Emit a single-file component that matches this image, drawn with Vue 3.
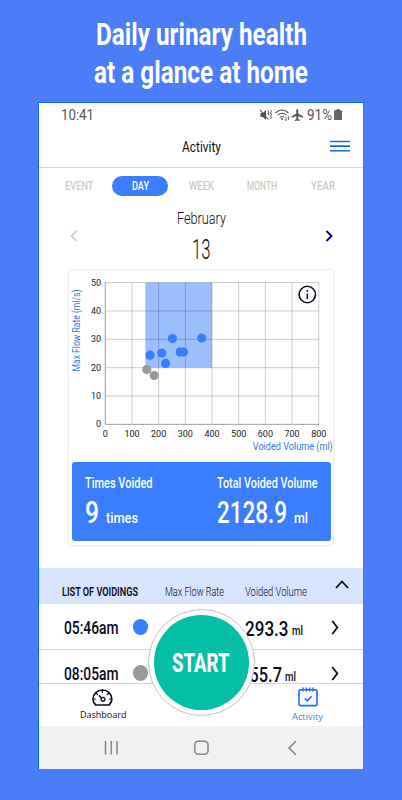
<template>
  <div class="page">
    <div class="headline">
      <Label text="Daily urinary health" :w="211" :size="31" />
      <Label text="at a glance at home" :w="214" :size="31" />
    </div>

    <div class="phone">
      <div class="status">
        <Label class="clock" text="10:41" :w="33" :size="14" />
        <svg class="status-icons" width="46" height="14" viewBox="0 0 46 14">
          <path d="M1.5 5h2.3L7 2v10L3.8 9H1.5z" fill="#555" />
          <path d="M1 1.8l8.5 9.7" stroke="#555" stroke-width="1.1" />
          <path d="M9 2.5l.8 1.5-.8 1.5.8 1.5M11.6 2l.8 1.5-.8 1.5.8 1.5-.8 1.5.8 1.5-.8 1.5" fill="none" stroke="#555" />
          <g fill="none" stroke="#555" stroke-width="1.1">
            <path d="M16.500 5q6.500-6 13 0M18.700 7.200q4.300-3.900 8.600 0M21 9.300q2-1.700 4 0" />
            <path d="M27 8.500v4M26 11.500l1 1 1-1M29.500 12V8.500M28.700 9.300l.8-.8.8.8" stroke-width=".8" />
          </g>
          <circle cx="23" cy="11" r="1.100" fill="#555" />
          <path d="M38.300 1q1 0 1 1.400v3l4.800 3v1.400l-4.800-1.500v2.700l1.500 1.100v1l-2.500-.7-2.500.7v-1l1.500-1.100V8.300l-4.800 1.500V8.400l4.800-3v-3Q37.300 1 38.300 1z" fill="#555" />
        </svg>
        <Label class="percent" text="91%" :w="25" :size="14" />
        <svg class="battery" width="8" height="11" viewBox="0 0 8 11">
          <path d="M2.500 0h3v1.200H8V11H0V1.200h2.500z" fill="#666" />
        </svg>
      </div>

      <div class="header">
        <Label text="Activity" :w="39" :size="15.5" />
        <svg class="burger" width="20" height="12" viewBox="0 0 20 12">
          <path d="M0 1.500h20M0 6.100h20M0 10.700h20" stroke="#1b68f0" stroke-width="1.600" />
        </svg>
      </div>

      <div class="tabs">
        <div v-for="tab in tabs" :key="tab.name" class="tab" :class="{ active: tab.name === current }" @click="current = tab.name">
          <Label :text="tab.name" :w="tab.w" :size="12.8" />
        </div>
      </div>

      <div class="date">
        <svg width="8" height="12" viewBox="0 0 8 12" class="prev"><path d="M6.500 1L1.500 6l5 5" /></svg>
        <div class="day">
          <Label text="February" :w="49" :size="16.3" />
          <Label text="13" :w="18.5" :size="27" />
        </div>
        <svg width="8" height="12" viewBox="0 0 8 12" class="next"><path d="M1.500 1l5 5-5 5" /></svg>
      </div>

      <div class="card">
        <svg class="chart" width="264" height="192" viewBox="69 270 264 192">
          <rect :x="px(150)" y="282.500" :width="px(400) - px(150)" height="85" fill="#9dbeff" />
          <g stroke="#000" stroke-opacity=".2">
            <line v-for="v in xTicks" :key="'x' + v" :x1="px(v)" :x2="px(v)" y1="282.500" y2="424.500" />
            <line v-for="v in yTicks" :key="'y' + v" x1="105.300" x2="319" :y1="py(v)" :y2="py(v)" />
          </g>
          <path d="M105.300 282v142.400H319" fill="none" stroke="#aaa" />
          <text v-for="v in xTicks" :key="'tx' + v" class="tick" :x="px(v)" y="436.500" text-anchor="middle">{{ v }}</text>
          <text v-for="v in yTicks" :key="'ty' + v" class="tick" x="101" :y="py(v) + 3" text-anchor="end">{{ v }}</text>
          <circle v-for="(p, i) in points" :key="i" :cx="p.x" :cy="p.y" r="4.600" :fill="p.low ? '#999' : '#3b7dff'" />
          <text class="axis" transform="translate(80 371.500) rotate(-90)" textLength="82" lengthAdjust="spacingAndGlyphs">Max Flow Rate (ml/s)</text>
          <text class="axis" x="252.800" y="450" textLength="80" lengthAdjust="spacingAndGlyphs">Voided Volume (ml)</text>
          <circle cx="307.300" cy="294.500" r="8.200" fill="#fff" stroke="#0b0b24" stroke-width="1.600" />
          <path d="M307.300 290v1.800M307.300 293.500v5.500" stroke="#0b0b24" stroke-width="1.500" />
        </svg>
        <div class="totals">
          <div class="total">
            <Label text="Times Voided" :w="67.5" :size="14.5" />
            <div class="value">
              <Label text="9" :w="14" :size="32" />
              <Label text="times" :w="32" :size="15.5" />
            </div>
          </div>
          <div class="total">
            <Label text="Total Voided Volume" :w="100.5" :size="14.5" />
            <div class="value">
              <Label text="2128.9" :w="70" :size="32" />
              <Label text="ml" :w="14" :size="15.5" />
            </div>
          </div>
        </div>
      </div>

      <div class="list-head">
        <Label class="title" text="LIST OF VOIDINGS" :w="76" :size="12.8" />
        <Label class="flow" text="Max Flow Rate" :w="59" :size="12.8" />
        <Label class="vol" text="Voided Volume" :w="62" :size="12.8" />
        <svg class="up" width="14" height="9" viewBox="0 0 14 9"><path d="M1 8l6-6.500L13 8" /></svg>
      </div>

      <div class="list">
        <div v-for="row in rows" :key="row.time" class="row">
          <Label class="time" :text="row.time" :w="54.5" :size="18" />
          <span class="dot" :class="{ low: row.low }"></span>
          <div class="amount" :class="{ low: row.low }">
            <Label :text="row.volume" :w="row.low ? 42 : 43.5" :size="20.5" />
            <Label text="ml" :w="11" :size="13" />
          </div>
          <svg class="go" width="8" height="15" viewBox="0 0 8 15"><path d="M1.300 1l5 6.500-5 6.500" /></svg>
        </div>
      </div>

      <div class="nav">
        <div class="nav-item dash">
          <svg width="21" height="17" viewBox="0 0 21 17" fill="none" stroke="#0b0b24" stroke-width="1.600" stroke-linecap="round" stroke-linejoin="round">
            <path d="M3.800 16Q1 13.800 1 10a9.400 9 0 0 1 18.800 0q0 3.800-2.800 6z" />
            <path d="M10.400 1.200v2M1.500 10h2M17.300 10h2M4.300 4.300l1.200 1.200M16.500 4.300l-1.200 1.200" stroke-width="1.200" />
            <circle cx="11" cy="10.200" r="1.900" stroke-width="1.300" />
            <path d="M7.300 6.700l2.300 2.300" />
          </svg>
          <Label text="Dashboard" :w="46.5" :size="9.3" />
        </div>
        <div class="nav-item act">
          <svg width="20" height="20" viewBox="0 0 20 20" fill="none" stroke="#1f6ff5" stroke-width="1.600">
            <rect x="1" y="2.800" width="18" height="15.800" rx="1.500" />
            <path d="M5 .5v4M8.300 .5v4M11.700 .5v4M15 .5v4" stroke-width="1.400" />
            <path d="M6.700 11.300l2.700 2.500 4.300-4.600" />
          </svg>
          <Label text="Activity" :w="31" :size="9.3" />
        </div>
      </div>

      <div class="system">
        <svg width="324" height="43" viewBox="0 0 324 43" fill="none" stroke="#858585" stroke-width="1.500">
          <path d="M66.500 15v13.500M72.300 15v13.500M78 15v13.500" />
          <rect x="155.800" y="15.300" width="13.200" height="13" rx="3.500" />
          <path d="M257 15.300l-7 6.700 7 6.700" />
        </svg>
      </div>

      <button class="start">
        <span class="disc"><Label text="START" :w="57.5" :size="25.5" /></span>
      </button>
    </div>
  </div>
</template>

<script setup>
import { h, ref } from 'vue'

// condensed one-line text: the box is as tall as the capitals, w is the set width
const Label = (props) =>
  h('svg', { class: 'label', width: props.w, height: props.size * 0.711 }, [
    h('text', {
      x: 0,
      y: props.size * 0.711,
      'font-size': props.size,
      textLength: props.w,
      lengthAdjust: 'spacingAndGlyphs'
    }, props.text)
  ])
Label.props = ['text', 'w', 'size']

const current = ref('DAY')
const tabs = [
  { name: 'EVENT', w: 28.5 },
  { name: 'DAY', w: 17 },
  { name: 'WEEK', w: 25 },
  { name: 'MONTH', w: 30 },
  { name: 'YEAR', w: 24 }
]

const xTicks = [0, 100, 200, 300, 400, 500, 600, 700, 800]
const yTicks = [0, 10, 20, 30, 40, 50]
const px = (v) => 105.3 + v * 0.2668
const py = (v) => 424.4 - v * 2.836

const points = [
  { x: 150, y: 355.2 },
  { x: 161.7, y: 353 },
  { x: 165.6, y: 363.4 },
  { x: 172.4, y: 338.6 },
  { x: 180.2, y: 352 },
  { x: 183.6, y: 352 },
  { x: 201.7, y: 338 },
  { x: 146.8, y: 369.6, low: true },
  { x: 154.2, y: 375.5, low: true }
]

const rows = [
  { time: '05:46am', volume: '293.3' },
  { time: '08:05am', volume: '155.7', low: true }
]
</script>

<style>
body {
  background: #4c7df9;
}
</style>

<style scoped>
.page {
  width: 402px;
  height: 800px;
  overflow: hidden;
  background: #4c7df9;
  font-family: Roboto, "Liberation Sans", sans-serif;
}
.label {
  display: block;
  flex: none;
  overflow: visible;
  fill: currentColor;
}
.headline {
  height: 102px;
  padding-top: 22.5px;
  box-sizing: border-box;
  display: flex;
  flex-direction: column;
  align-items: center;
  gap: 16.5px;
  color: #fff;
  font-weight: 700;
}
.phone {
  position: relative;
  width: 324px;
  height: 666px;
  margin-left: 38px;
  border: 1px solid #0f6bff;
  border-right-color: #3d78fb;
  border-bottom: 0;
  background: #fff;
  color: #0b0b24;
}
.status {
  height: 23px;
  display: flex;
  align-items: center;
  color: #555;
}
.clock {
  margin-left: 22px;
}
.status-icons {
  margin-left: 165px;
}
.percent,
.battery {
  margin-left: 2px;
}
.header {
  height: 41px;
  border-bottom: 1px solid #d9d9d9;
  display: grid;
  grid-template-columns: 1fr auto 1fr;
  align-items: center;
  padding-top: 0;
  color: #111;
}
.header .label {
  grid-column: 2;
}
.burger {
  justify-self: end;
  margin: 0 13px 2px 0;
}
.tabs {
  height: 36px;
  padding: 0 9.5px;
  display: grid;
  grid-template-columns: repeat(5, 61px);
  align-items: center;
  justify-items: center;
  color: #cbcbc5;
  font-weight: 500;
}
.tab {
  height: 20px;
  display: flex;
  align-items: center;
}
.tab.active {
  width: 56px;
  justify-content: center;
  border-radius: 10px;
  background: #3b7dff;
  color: #fff;
}
.date {
  height: 65px;
  box-sizing: border-box;
  display: flex;
  justify-content: space-between;
  align-items: center;
  padding: 0 30px 2px 31px;
}
.date path {
  fill: none;
  stroke: #000090;
  stroke-width: 1.8;
}
.date .prev path {
  stroke: #c9caf0;
}
.day {
  height: 48px;
  display: flex;
  flex-direction: column;
  align-items: center;
  justify-content: space-between;
  font-weight: 300;
}
.card {
  width: 264px;
  height: 275px;
  margin-left: 29px;
  border: 1px solid #eee;
  border-radius: 4px;
  box-shadow: 0 0 2px #eee;
}
.chart {
  display: block;
  overflow: visible;
}
.tick {
  font-size: 9px;
  fill: #222;
}
.axis {
  font-size: 11.5px;
  fill: #3478e5;
}
.totals {
  width: 259px;
  height: 79px;
  margin-left: 2.5px;
  border-radius: 3px;
  background: #3b7dff;
  color: #fff;
  display: grid;
  grid-template-columns: 132px 1fr;
  padding: 15.5px 0 0 13.5px;
  box-sizing: border-box;
  font-weight: 500;
}
.value {
  display: flex;
  align-items: flex-end;
  gap: 7px;
  margin-top: 12.5px;
}
.list-head {
  height: 36px;
  margin-top: 22px;
  background: #d8e4fe;
  display: flex;
  align-items: flex-start;
  font-weight: 300;
}
.list-head .label {
  margin-top: 19px;
}
.list-head .title {
  margin-left: 22.5px;
  font-weight: 600;
}
.flow {
  margin-left: 27px;
}
.vol {
  margin-left: 21.5px;
}
.up {
  margin: 12px 0 0 28px;
}
.up path,
.go path {
  fill: none;
  stroke: #0b0b16;
  stroke-width: 1.8;
}
.list {
  height: 79px;
  overflow: hidden;
}
.row {
  height: 45px;
  border-bottom: 1px solid #d5d5d5;
  display: flex;
  align-items: flex-start;
  font-weight: 500;
}
.time {
  margin: 17.3px 0 0 25.3px;
}
.dot {
  width: 15.5px;
  height: 15.5px;
  margin: 15px 0 0 14px;
  border-radius: 50%;
  background: #3b7dff;
}
.dot.low {
  background: #999;
}
.amount {
  display: flex;
  align-items: flex-end;
  gap: 3px;
  margin: 17px 0 0 97px;
}
.amount.low {
  margin-left: 92px;
}
.go {
  margin: 15.5px 24.5px 0 auto;
}
.nav {
  height: 42px;
  border-top: 1px solid #d5d5d5;
  background: #fff;
  display: flex;
  justify-content: space-between;
  font-family: "Open Sans", "Noto Sans", sans-serif;
}
.nav-item {
  display: flex;
  flex-direction: column;
  align-items: center;
}
.dash {
  padding: 4.5px 0 0 40.5px;
  gap: 5.5px;
}
.act {
  padding: 3px 40px 0 0;
  gap: 5.5px;
  color: #4a85dc;
}
.system {
  height: 43px;
  background: #f1f1f1;
}
.start {
  position: absolute;
  left: 108.5px;
  top: 506.3px;
  width: 107px;
  height: 107px;
  padding: 0;
  border: 1px solid #c4c4bf;
  border-radius: 50%;
  background: #fff;
  color: #fff;
  font: inherit;
  font-weight: 800;
  display: flex;
  align-items: center;
  justify-content: center;
}
.disc {
  width: 95px;
  height: 95px;
  border-radius: 50%;
  background: #04bfa5;
  display: flex;
  align-items: center;
  justify-content: center;
}
</style>
